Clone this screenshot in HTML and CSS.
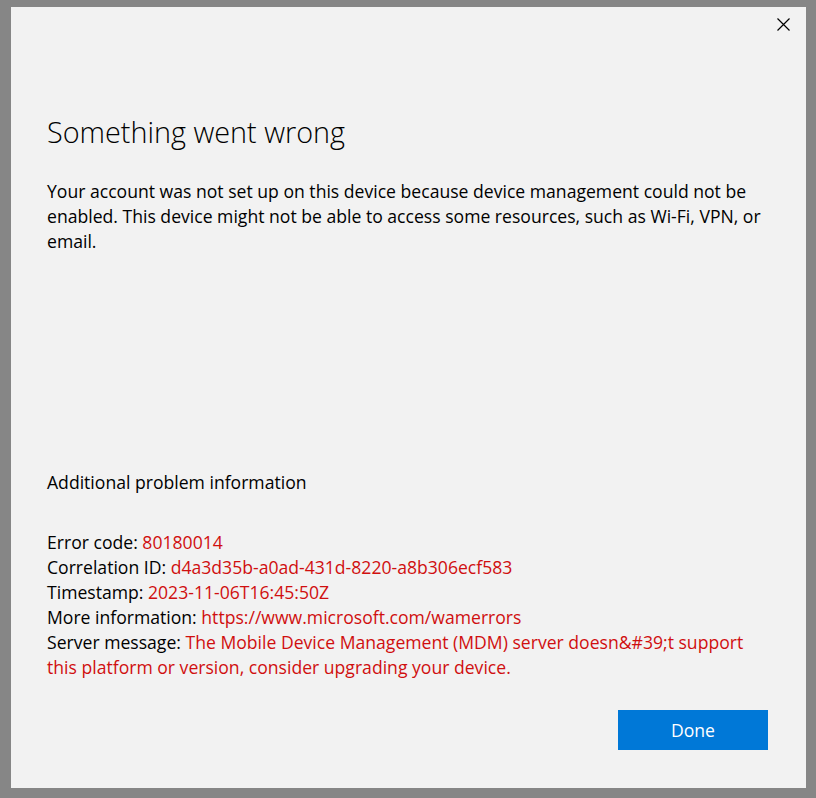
FILE: index.html
```html
<!DOCTYPE html>
<html>
<head>
<meta charset="utf-8">
<link rel="stylesheet" href="styles.css">
</head>
<body>
<div class="dialog">
  <div class="topbar">
    <button class="close" aria-label="Close">
      <svg width="13" height="13" viewBox="0 0 13 13"><path d="M0.5 0.5 L12.5 12.5 M12.5 0.5 L0.5 12.5" stroke="#000" stroke-width="1.2" fill="none"/></svg>
    </button>
  </div>
  <div class="content">
    <h1 class="title">Something went wrong</h1>
    <p class="message">Your account was not set up on this device because device management could not be enabled. This device might not be able to access some resources, such as Wi-Fi, VPN, or email.</p>
    <div class="details">
      <div class="details-head">Additional problem information</div>
      <div class="info">
        <div class="row">Error code: <span class="red">80180014</span></div>
        <div class="row">Correlation ID: <span class="red">d4a3d35b-a0ad-431d-8220-a8b306ecf583</span></div>
        <div class="row">Timestamp: <span class="red">2023-11-06T16:45:50Z</span></div>
        <div class="row">More information: <span class="red">https://www.microsoft.com/wamerrors</span></div>
        <div class="row">Server message: <span class="red">The Mobile Device Management (MDM) server doesn&amp;#39;t support this platform or version, consider upgrading your device.</span></div>
      </div>
    </div>
  </div>
  <div class="footer">
    <button class="done">Done</button>
  </div>
</div>
</body>
</html>
```
FILE: styles.css
```css
html, body {
  margin: 0;
  padding: 0;
}
body {
  background: #868686;
  width: 816px;
  height: 798px;
  overflow: hidden;
  font-family: "Open Sans", "Noto Sans", sans-serif;
  color: #000;
}
.dialog {
  margin: 7px 0 0 11px;
  width: 795px;
  height: 781px;
  background: #f2f2f2;
  display: flex;
  flex-direction: column;
  box-sizing: border-box;
}
.topbar {
  display: flex;
  justify-content: flex-end;
  padding: 11px 16px 0 0;
  height: 32px;
  box-sizing: border-box;
}
.close {
  border: none;
  background: transparent;
  padding: 0;
  width: 13px;
  height: 13px;
}
.close svg { display: block; }
.content {
  padding: 0 36px;
  flex: 1;
}
.title {
  font-weight: 300;
  font-size: 28.8px;
  line-height: 36px;
  margin: 75px 0 0 0;
}
.message {
  font-size: 17.6px;
  line-height: 25px;
  margin: 29px 0 0 0;
}
.details {
  margin-top: 216px;
}
.details-head {
  font-size: 17.6px;
  line-height: 25px;
}
.info {
  margin-top: 35px;
  font-size: 17.6px;
  line-height: 25px;
}
.red { color: #d00f0f; }
.footer {
  display: flex;
  justify-content: flex-end;
  padding: 0 38px 38px 0;
}
.done {
  width: 150px;
  height: 40px;
  border: none;
  background: #0078d7;
  color: #fff;
  font-family: inherit;
  font-size: 17.6px;
  padding: 0;
}
```
